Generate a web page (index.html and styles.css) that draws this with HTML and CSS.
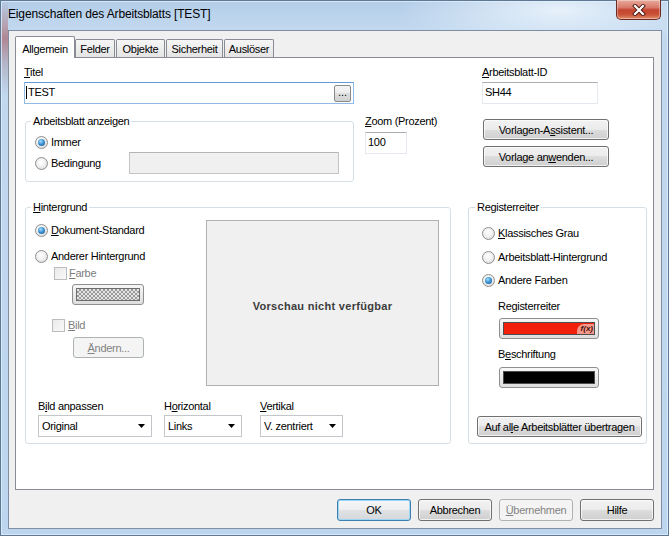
FILE: index.html
```html
<!DOCTYPE html>
<html lang="de">
<head>
<meta charset="utf-8">
<title>Eigenschaften des Arbeitsblatts [TEST]</title>
<link rel="stylesheet" href="styles.css">
</head>
<body>
<div class="window">
  <div class="titlebar">
    <span class="title">Eigenschaften des Arbeitsblatts [TEST]</span>
    <div class="close">
      <svg width="14" height="12" viewBox="0 0 14 12">
        <path d="M3 2 L11 10 M11 2 L3 10" stroke="#4b1810" stroke-width="4" stroke-linecap="square" fill="none"/>
        <path d="M3 2 L11 10 M11 2 L3 10" stroke="#ffffff" stroke-width="2.2" stroke-linecap="square" fill="none"/>
      </svg>
    </div>
  </div>
  <div class="client">
    <div class="tabs">
      <div class="tab active w1">Allgemein</div>
      <div class="tab w2">Felder</div>
      <div class="tab w3">Objekte</div>
      <div class="tab w4">Sicherheit</div>
      <div class="tab w5">Auslöser</div>
    </div>
    <div class="panel">
      <div class="row1">
        <div class="field f-title">
          <div class="lbl"><u>T</u>itel</div>
          <div class="input focus"><span class="caret"></span><span class="val">TEST</span><span class="dots">...</span></div>
        </div>
        <div class="field f-id">
          <div class="lbl"><u>A</u>rbeitsblatt-ID</div>
          <div class="input"><span class="val">SH44</span></div>
        </div>
      </div>
      <div class="row2">
        <fieldset class="grp g-show">
          <legend>Arbeitsblatt anzeigen</legend>
          <div class="opt"><span class="radio on"></span><span class="olbl">Immer</span></div>
          <div class="opt tall"><span class="radio"></span><span class="olbl w-bed">Bedingung</span><div class="input disabled cond"></div></div>
        </fieldset>
        <div class="field f-zoom">
          <div class="lbl"><u>Z</u>oom (Prozent)</div>
          <div class="input"><span class="val">100</span></div>
        </div>
        <div class="tplbtns">
          <div class="btn b-tpl">Vorlagen-A<u>s</u>sistent...</div>
          <div class="btn b-tpl">Vorlage an<u>w</u>enden...</div>
        </div>
      </div>
      <div class="row3">
        <fieldset class="grp g-bg">
          <legend><u>H</u>intergrund</legend>
          <div class="bg-top">
            <div class="bg-left">
              <div class="opt"><span class="radio on"></span><span class="olbl"><u>D</u>okument-Standard</span></div>
              <div class="opt mt6"><span class="radio"></span><span class="olbl">Anderer Hintergrund</span></div>
              <div class="chkrow c-farbe"><span class="chk"></span><span class="dis"><u>F</u>arbe</span></div>
              <div class="swatch s-farbe"><div class="swin checker"></div></div>
              <div class="chkrow c-bild"><span class="chk"></span><span class="dis"><u>B</u>ild</span></div>
              <div class="btn disabled b-aendern"><u>Ä</u>ndern...</div>
            </div>
            <div class="preview">Vorschau nicht verfügbar</div>
          </div>
          <div class="bg-bottom">
            <div class="col c1">
              <div class="lbl">B<u>i</u>ld anpassen</div>
              <div class="combo"><span>Original</span><svg width="7" height="4" viewBox="0 0 7 4"><path d="M0 0H7L3.5 4Z" fill="#000"/></svg></div>
            </div>
            <div class="col c2">
              <div class="lbl">H<u>o</u>rizontal</div>
              <div class="combo"><span>Links</span><svg width="7" height="4" viewBox="0 0 7 4"><path d="M0 0H7L3.5 4Z" fill="#000"/></svg></div>
            </div>
            <div class="col c3">
              <div class="lbl"><u>V</u>ertikal</div>
              <div class="combo"><span>V. zentriert</span><svg width="7" height="4" viewBox="0 0 7 4"><path d="M0 0H7L3.5 4Z" fill="#000"/></svg></div>
            </div>
          </div>
        </fieldset>
        <fieldset class="grp g-reg">
          <legend>Registerreiter</legend>
          <div class="opt"><span class="radio"></span><span class="olbl"><u>K</u>lassisches Grau</span></div>
          <div class="opt mt4"><span class="radio"></span><span class="olbl">Arbeitsblatt-Hintergrund</span></div>
          <div class="opt mt3"><span class="radio on"></span><span class="olbl">Andere Farben</span></div>
          <div class="lbl r-l1">Registerreiter</div>
          <div class="swatch s-reg s-red"><div class="swin red"><span class="fx">f(x)</span></div></div>
          <div class="lbl r-l2">B<u>e</u>schriftung</div>
          <div class="swatch s-reg s-black"><div class="swin black"></div></div>
          <div class="btn b-all">Auf al<u>l</u>e Arbeitsblätter übertragen</div>
        </fieldset>
      </div>
    </div>
    <div class="buttons">
      <div class="btn b-dlg default">OK</div>
      <div class="btn b-dlg">Abbrechen</div>
      <div class="btn b-dlg disabled"><u>Ü</u>bernehmen</div>
      <div class="btn b-dlg">Hilfe</div>
    </div>
  </div>
</div>
</body>
</html>
```

FILE: styles.css
```css
* { box-sizing: border-box; }
html, body { margin: 0; padding: 0; }
body {
  width: 669px;
  height: 536px;
  overflow: hidden;
  background: #ffffff;
  font-family: "Liberation Sans", Arial, sans-serif;
  font-size: 11px;
  letter-spacing: -0.3px;
  color: #000;
}
u { text-decoration: underline; text-underline-offset: 1px; }

.window {
  width: 669px;
  height: 536px;
  display: flex;
  flex-direction: column;
  background:
    linear-gradient(to bottom, rgba(175,95,95,0) 0, rgba(165,80,85,0.6) 38px, rgba(150,110,120,0.3) 65px, rgba(0,0,0,0) 95px) 1px 0 / 7px 536px no-repeat,
    radial-gradient(ellipse 160px 40px at 560px 10px, rgba(235,244,252,0.9), rgba(235,244,252,0)),
    linear-gradient(to bottom, #b3cde8 0, #c1d8ef 28px, #bdd5ee 100%);
  box-shadow: inset 0 0 0 1px #5f7893, inset 0 0 0 2px rgba(225,240,252,0.75);
}

.titlebar {
  height: 30px;
  flex: none;
  display: flex;
  align-items: flex-start;
}
.title {
  font-size: 12px;
  letter-spacing: -0.15px;
  line-height: 15px;
  margin: 7px 0 0 8px;
  color: #000;
}
.close {
  margin-left: auto;
  margin-right: 8px;
  width: 45px;
  height: 20px;
  border: 1px solid #6b2a22;
  border-top: none;
  border-radius: 0 0 5px 5px;
  background: linear-gradient(to bottom, #e8aa9b 0, #d8796a 40%, #c54631 52%, #c94f35 75%, #e18d6c 100%);
  box-shadow: inset 0 0 0 1px rgba(255,255,255,0.35);
  display: flex;
  align-items: center;
  justify-content: center;
}

.client {
  margin-left: 8px;
  width: 654px;
  height: 499px;
  border: 1px solid #7f8ea0;
  background: #f0f0f0;
  display: flex;
  flex-direction: column;
}

/* tabs */
.tabs {
  display: flex;
  align-items: flex-end;
  height: 21px;
  margin: 5px 0 0 6px;
}
.tab {
  height: 18px;
  padding-top: 2px;
  line-height: 14px;
  text-align: center;
  border: 1px solid #898c95;
  border-bottom: none;
  border-radius: 2px 2px 0 0;
  background: linear-gradient(to bottom, #f6f6f6, #e4e4e4);
  margin-left: 1px;
}
.tab.active {
  height: 22px;
  padding-top: 5px;
  margin-bottom: -1px;
  margin-left: 0;
  background: #ffffff;
  position: relative;
  z-index: 1;
}
.w1 { width: 60px; }
.w2 { width: 40px; margin-left: 0; }
.w3 { width: 49px; }
.w4 { width: 57px; }
.w5 { width: 50px; }

.panel {
  margin-left: 6px;
  width: 639px;
  height: 433px;
  border: 1px solid #898c95;
  background: #ffffff;
  padding: 7px 0 0 8px;
  flex: none;
}

.lbl { line-height: 14px; height: 14px; white-space: nowrap; }

.row1, .row2, .row3 { display: flex; align-items: flex-start; }
.row2 { margin-top: 10px; }
.row3 { margin-top: 18px; }

.field .input { margin-top: 3px; }
.f-title { width: 330px; }
.f-id { width: 116px; margin-left: 128px; }
.f-zoom { width: 42px; margin-left: 11px; }
.f-zoom .input { margin-top: 4px; }

.input {
  height: 22px;
  border: 1px solid #e3e9ef;
  border-top-color: #abadb3;
  background: #fff;
  display: flex;
  align-items: center;
  padding: 0 2px 2px 2px;
  line-height: 14px;
}
.input.focus { border-color: #8fbbe6; border-top-color: #5e9bd8; padding-left: 1px; }
.input .val { flex: 1; }
.caret { width: 1px; height: 13px; background: #000; margin-right: 1px; }
.dots {
  width: 17px;
  height: 17px;
  margin-bottom: -2px;
  border: 1px solid #8a8a8a;
  border-radius: 2px;
  background: linear-gradient(to bottom, #f4f4f4 0, #ececec 50%, #dedede 50%, #d2d2d2 100%);
  text-align: center;
  line-height: 12px;
  font-size: 11px;
  letter-spacing: 0;
}
.input.disabled { background: #f0f0f0; border-color: #c4c4c4; border-top-color: #b5b5b5; }

/* group boxes */
.grp {
  margin: 0;
  border: 1px solid #d5dfe5;
  border-radius: 3px;
  min-width: 0;
}
.grp legend { padding: 0 2px; line-height: 14px; height: 14px; white-space: nowrap; }
.g-show { margin-left: 1px; width: 329px; padding: 4px 0 7px 9px; }
.g-show legend { margin-left: -4px; }

.opt { display: flex; align-items: center; height: 20px; white-space: nowrap; }
.opt.tall { height: 22px; }
.olbl { margin-left: 3px; }
.w-bed { width: 78px; flex: none; }
.cond { width: 210px; }
.mt6 { margin-top: 6px; }
.mt4 { margin-top: 4px; }
.mt3 { margin-top: 3px; }

.radio {
  flex: none;
  width: 13px;
  height: 13px;
  border-radius: 50%;
  border: 1px solid #8e8f8f;
  background: radial-gradient(circle at 45% 40%, #ffffff 0, #f1f1f1 45%, #cfcfcf 100%);
  display: flex;
  align-items: center;
  justify-content: center;
}
.radio.on::after {
  content: "";
  width: 7px;
  height: 7px;
  border-radius: 50%;
  background: radial-gradient(circle at 40% 35%, #a6dcfb 0, #3d96d6 45%, #0d4b88 100%);
}

.chkrow { display: flex; align-items: center; height: 14px; }
.chk {
  flex: none;
  width: 13px;
  height: 13px;
  border: 1px solid #bcbcbc;
  background: linear-gradient(135deg, #eaeaea, #f9f9f9);
}
.dis { color: #7d7d7d; }
.c-farbe { padding-left: 19px; }
.c-farbe .dis { margin-left: 2px; }
.c-bild { padding-left: 17px; margin-top: 13px; }
.c-bild .dis { margin-left: 3px; }

.swatch {
  height: 21px;
  border: 1px solid #8e8f8f;
  border-radius: 3px;
  background: linear-gradient(to bottom, #f7f7f7, #dedede);
  padding: 3px;
  display: flex;
}
.swin {
  flex: 1;
  border: 1px solid #4d4d4d;
  display: flex;
  justify-content: flex-end;
  align-items: flex-end;
}
.checker {
  background: repeating-conic-gradient(#9a9a9a 0 25%, #e4e4e4 0 50%) 0 0 / 4px 4px;
  border-color: #6d6d6d;
}
.s-farbe { width: 72px; margin: 4px 0 0 37px; }
.red { background: #f21f0b; }
.black { background: #000; }
.fx {
  background: #f5988b;
  border-radius: 7px 0 0 0;
  font: italic bold 8px "Liberation Sans", Arial, sans-serif;
  letter-spacing: 0;
  line-height: 10px;
  padding: 0 1px 0 4px;
  color: #3d0d07;
}

/* buttons */
.btn {
  height: 21px;
  border: 1px solid #707070;
  border-radius: 3px;
  background: linear-gradient(to bottom, #f2f2f2 0, #ebebeb 50%, #dddddd 50%, #cfcfcf 100%);
  box-shadow: inset 0 0 0 1px rgba(255,255,255,0.7);
  display: flex;
  align-items: center;
  justify-content: center;
  line-height: 14px;
  white-space: nowrap;
}
.btn.disabled {
  border-color: #adb2b5;
  background: #f4f4f4;
  color: #838383;
  box-shadow: none;
}
.btn.default {
  border-color: #3c7fb1;
  box-shadow: inset 0 0 0 1px #9fd4f3;
  background: linear-gradient(to bottom, #f4f6f8 0, #eceef0 50%, #e0e2e4 50%, #d5d8db 100%);
}
.b-aendern { width: 71px; margin: 5px 0 0 38px; }
.tplbtns { margin: 5px 0 0 76px; width: 126px; display: flex; flex-direction: column; gap: 6px; }
.b-tpl { width: 126px; }

/* Hintergrund */
.g-bg { margin-left: 1px; width: 426px; padding: 6px 0 6px 9px; }
.g-bg legend { margin-left: -4px; }
.bg-top { display: flex; align-items: flex-start; }
.bg-left { width: 171px; flex: none; }
.preview {
  width: 233px;
  height: 166px;
  flex: none;
  background: #f0f0f0;
  border: 1px solid #b1b1b1;
  display: flex;
  align-items: center;
  justify-content: center;
  font-weight: bold;
  letter-spacing: 0.3px;
  color: #3c3c3c;
  padding-top: 5px;
}
.bg-bottom { display: flex; margin-top: 13px; }
.col .combo { margin-top: 2px; }
.c1 { width: 114px; margin-left: 3px; }
.c2 { width: 78px; margin-left: 12px; }
.c3 { width: 83px; margin-left: 18px; }
.combo {
  height: 22px;
  border: 1px solid #c3c6cb;
  background: #fff;
  display: flex;
  align-items: center;
  justify-content: space-between;
  padding: 0 6px 1px 3px;
  white-space: nowrap;
}

/* Registerreiter */
.g-reg { margin-left: 17px; width: 179px; padding: 9px 0 6px 13px; }
.g-reg legend { margin-left: -7px; }
.r-l1 { margin: 9px 0 0 16px; }
.r-l2 { margin: 8px 0 0 16px; }
.s-reg { width: 100px; margin-left: 17px; }
.s-red { margin-top: 5px; }
.s-black { margin-top: 6px; }
.b-all { width: 165px; margin: 28px 0 0 -5px; }

/* dialog buttons */
.buttons {
  display: flex;
  justify-content: flex-end;
  gap: 7px;
  margin-top: 9px;
  padding-right: 7px;
}
.b-dlg { width: 74px; height: 22px; }
```
